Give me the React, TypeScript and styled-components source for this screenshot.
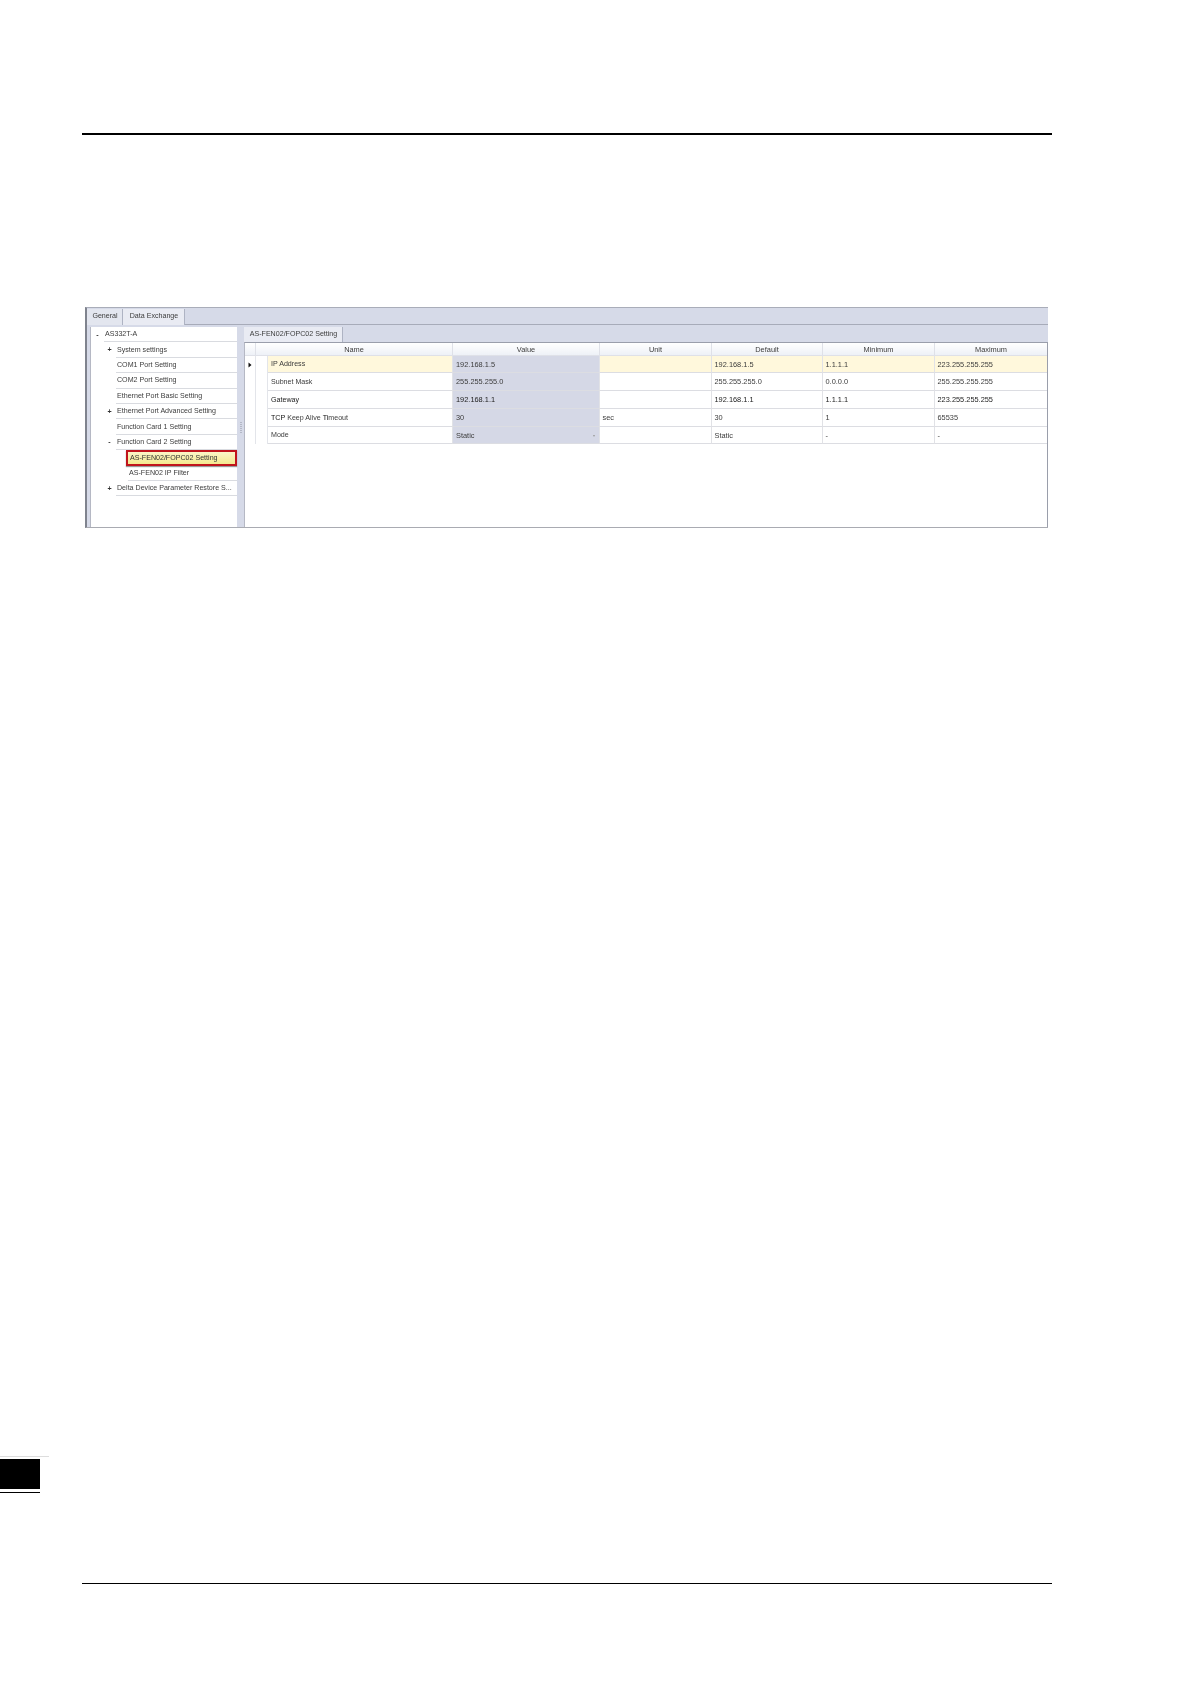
import React from "react";
import styled, {createGlobalStyle} from "styled-components";

const GlobalStyle = createGlobalStyle`
  html, body {
    margin: 0;
    background: white;
  }
`;

const Page = styled.div`
  position: relative;
  height: 1684px;
  padding-top: 133px;
  box-sizing: border-box;
  overflow: hidden;
  display: flex;
  flex-direction: column;
  font-family: "Liberation Sans", Arial, sans-serif;
`;

const TopRule = styled.div`
  height: 2px;
  margin: 0 139px 0 82px;
  background: black;
`;

const Window = styled.div`
  width: 963px;
  height: 221px;
  margin: 172px 0 0 85px;
  box-sizing: border-box;
  display: flex;
  flex-direction: column;
  background: #d6dae8;
  border-top: 1px solid #a9adb9;
  border-left: 2px solid #7f838e;
  border-bottom: 1px solid #a9abb2;
  font-size: 7.4px;
  color: #3c3c3c;
  filter: blur(0.35px);
`;

const TabStrip = styled.div`
  height: 16px;
  flex: none;
  display: flex;
  align-items: flex-end;
  border-bottom: 1px solid #a7abb9;
`;

const Tab = styled.div<{ $active?: boolean; $width: number }>`
  width: ${p => p.$width}px;
  height: 16px;
  box-sizing: border-box;
  padding: 0 0 2px 1px;
  display: flex;
  align-items: center;
  justify-content: center;
  font-size: 7.1px;
  background: ${p => p.$active ? "#e9ebf3" : "#e3e6ef"};
  border-right: 1px solid #aeb3c3;
  margin-bottom: -1px;
`;

const Body = styled.div`
  flex: 1;
  min-height: 0;
  display: flex;
  padding: 2px 0 0 3px;
`;

const Sidebar = styled.div`
  width: 147px;
  flex: none;
  background: white;
  font-size: 7.1px;
  border-left: 1px solid #b5b8c4;
  box-sizing: border-box;
`;

const TreeRow = styled.div<{ $level: number }>`
  height: 15.4px;
  display: flex;
  align-items: stretch;
  padding-left: ${p => 2 + p.$level * 12}px;
`;

const Expander = styled.span`
  width: 11px;
  flex: none;
  box-sizing: border-box;
  padding-right: 2px;
  display: flex;
  align-items: center;
  justify-content: center;
  font-weight: bold;
  color: #333;
`;

const TreeLabel = styled.div<{ $selected?: boolean }>`
  flex: 1;
  min-width: 0;
  display: flex;
  align-items: center;
  box-sizing: border-box;
  white-space: nowrap;
  padding-left: ${p => p.$selected ? "2px" : "1px"};
  border-bottom: 1px solid #d9dbe0;
  ${p => p.$selected && `
    margin-left: -2px;
    border: 2px solid #c0141c;
    background: linear-gradient(#fbf6c8, #f4e88f);
    color: #333;
    box-shadow: 0 1px 1px #999;
  `}
`;

const Splitter = styled.div`
  width: 7px;
  flex: none;
  display: flex;
  flex-direction: column;
  align-items: center;
  justify-content: center;
  gap: 1px;
  > i {
    width: 2px;
    height: 1px;
    background: #b4b8c6;
  }
`;

const Content = styled.div`
  flex: 1;
  min-width: 0;
  display: flex;
  flex-direction: column;
`;

const ContentTabs = styled.div`
  height: 15px;
  flex: none;
  display: flex;
`;

const Grid = styled.div`
  flex: 1;
  min-height: 0;
  background: white;
  border-top: 1px solid #9a9eab;
  border-left: 1px solid #b5b8c4;
  border-right: 1px solid #9a9eab;
`;

const Columns = styled.div`
  display: grid;
  grid-template-columns: 11px 12px 185px 147px 112px 111px 112px 112px;
`;

const HeaderCell = styled.div<{ $span?: number }>`
  height: 12px;
  grid-column: span ${p => p.$span || 1};
  display: flex;
  align-items: center;
  justify-content: center;
  background: linear-gradient(white, #eef1f7);
  border-right: 1px solid #dfe1e8;
  border-bottom: 1px solid #dfe1e8;
  &:last-child {
    border-right: none;
  }
`;

const DataRow = styled(Columns)<{ $current?: boolean; $height: number }>`
  height: ${p => p.$height}px;
  background: ${p => p.$current ? "#fff8dc" : "white"};
`;

const Indicator = styled.div`
  display: flex;
  align-items: center;
  justify-content: center;
  background: white;
  border-right: 1px solid #e3e5ea;
`;

const GroupCell = styled.div`
  background: white;
  border-right: 1px solid #e3e5ea;
`;

const Cell = styled.div<{ $name?: boolean; $value?: boolean; $dark?: boolean }>`
  position: relative;
  display: flex;
  align-items: center;
  padding-left: ${p => p.$name || p.$value ? "3px" : "2.5px"};
  white-space: pre;
  font-size: ${p => p.$name ? "7.1px" : "7.4px"};
  color: ${p => p.$dark ? "#222" : "#3c3c3c"};
  background: ${p => p.$value ? "#d5d8e6" : "transparent"};
  border-right: 1px solid #e1e2e6;
  border-bottom: 1px solid #dcdde2;
  &:last-child {
    border-right: none;
  }
  > b {
    color: #111;
    font-weight: normal;
  }
`;

const DropArrow = styled.span`
  position: absolute;
  right: 4px;
  top: 8px;
  border-left: 1.5px solid transparent;
  border-right: 1.5px solid transparent;
  border-top: 2px solid #999;
`;

const BottomArea = styled.div`
  position: absolute;
  left: 0;
  top: 1456px;
  width: 49px;
`;

const MarkerRule = styled.div`
  height: 1px;
  background: #ddd;
`;

const Marker = styled.div`
  width: 40px;
  height: 30px;
  margin-top: 2px;
  background: black;
`;

const MarkerLine = styled.div`
  width: 40px;
  height: 1.5px;
  margin-top: 2.5px;
  background: black;
`;

const BottomRule = styled.div`
  position: absolute;
  left: 82px;
  right: 139px;
  top: 1583px;
  height: 1px;
  background: black;
`;

const tree = [
  {level: 0, sign: "-", label: "AS332T-A"},
  {level: 1, sign: "+", label: "System settings"},
  {level: 1, sign: "", label: "COM1 Port Setting"},
  {level: 1, sign: "", label: "COM2 Port Setting"},
  {level: 1, sign: "", label: "Ethernet Port Basic Setting"},
  {level: 1, sign: "+", label: "Ethernet Port Advanced Setting"},
  {level: 1, sign: "", label: "Function Card 1 Setting"},
  {level: 1, sign: "-", label: "Function Card 2 Setting"},
  {level: 2, sign: "", label: "AS-FEN02/FOPC02 Setting", selected: true},
  {level: 2, sign: "", label: "AS-FEN02 IP Filter"},
  {level: 1, sign: "+", label: "Delta Device Parameter Restore S..."},
];

const headers = ["Value", "Unit", "Default", "Minimum", "Maximum"];

const rows = [
  {height: 17, values: ["IP Address", "192.168.1.5", "", "192.168.1.5", "1.1.1.1", "223.255.255.255"], current: true},
  {height: 18, values: ["Subnet Mask", "255.255.255.0", "", "255.255.255.0", "0.0.0.0", "255.255.255.255"]},
  {height: 18, values: ["Gateway", "192.168.1.1", "", "192.168.1.1", "1.1.1.1", "223.255.255.255"], dark: true},
  {height: 18, values: ["TCP Keep Alive Timeout", "30", "sec", "30", "1", "65535"]},
  {height: 17, values: ["Mode", "Static", "", "Static", "-", "-"]},
];

function App() {
  return (
    <Page>
      <GlobalStyle/>
      <TopRule/>
      <Window>
        <TabStrip>
          <Tab $width={36}>General</Tab>
          <Tab $width={62} $active>Data Exchange</Tab>
        </TabStrip>
        <Body>
          <Sidebar>
            {tree.map(t =>
              <TreeRow key={t.label} $level={t.level}>
                <Expander>{t.sign}</Expander>
                <TreeLabel $selected={t.selected}>{t.label}</TreeLabel>
              </TreeRow>)}
          </Sidebar>
          <Splitter>
            {[0, 1, 2, 3, 4, 5].map(i => <i key={i}/>)}
          </Splitter>
          <Content>
            <ContentTabs>
              <Tab $width={99} $active>AS-FEN02/FOPC02 Setting</Tab>
            </ContentTabs>
            <Grid>
              <Columns>
                <HeaderCell/>
                <HeaderCell $span={2}>Name</HeaderCell>
                {headers.map(h => <HeaderCell key={h}>{h}</HeaderCell>)}
              </Columns>
              {rows.map((r, i) =>
                <DataRow key={r.values[0]} $height={r.height} $current={r.current}>
                  <Indicator>
                    {i === 0 &&
                      <svg width="4" height="6" viewBox="0 0 4 6">
                        <path d="M0.5 0.5 L3.5 3 L0.5 5.5 Z" fill="#111"/>
                      </svg>}
                  </Indicator>
                  <GroupCell/>
                  {r.values.map((v, j) =>
                    <Cell key={j} $name={j === 0} $value={j === 1} $dark={r.dark}>
                      {v === "TCP Keep Alive Timeout"
                        ? <><b>TCP</b> Keep Alive <b>Ti</b>meout</>
                        : v}
                      {j === 1 && v === "Static" && <DropArrow/>}
                    </Cell>)}
                </DataRow>)}
            </Grid>
          </Content>
        </Body>
      </Window>
      <BottomArea>
        <MarkerRule/>
        <Marker/>
        <MarkerLine/>
      </BottomArea>
      <BottomRule/>
    </Page>
  );
}

export default App;
